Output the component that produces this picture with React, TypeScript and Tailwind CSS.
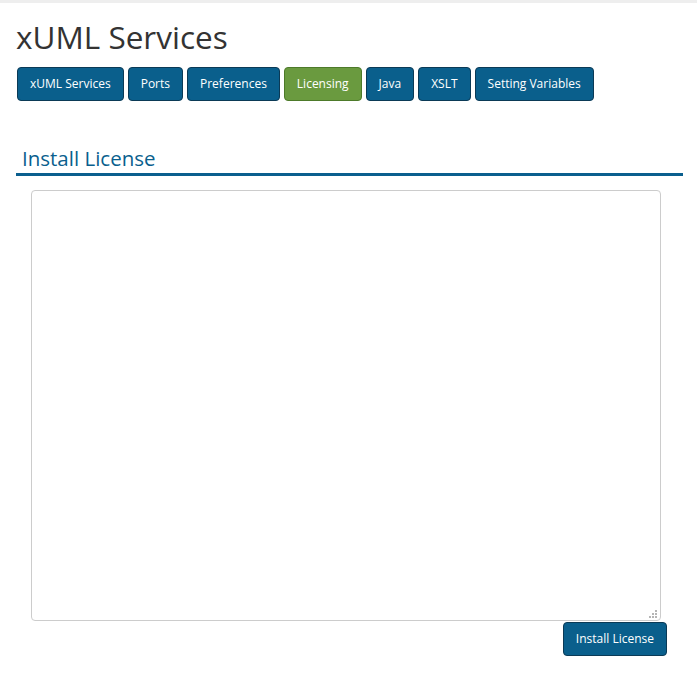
import { useState } from "react";

const tabs = [
  "xUML Services",
  "Ports",
  "Preferences",
  "Licensing",
  "Java",
  "XSLT",
  "Setting Variables",
];

// small dotted resize grip in the corner of the textarea
function Grip() {
  const dots = [
    [6, 0],
    [3, 3],
    [6, 3],
    [0, 6],
    [3, 6],
    [6, 6],
  ];
  return (
    <svg
      width="8"
      height="8"
      viewBox="0 0 8 8"
      className="pointer-events-none absolute bottom-[3px] right-[4px]"
    >
      {dots.map(([x, y]) => (
        <rect key={`${x}-${y}`} x={x} y={y} width="2" height="2" fill="#b5b5b5" />
      ))}
    </svg>
  );
}

export default function App() {
  const [active, setActive] = useState("Licensing");
  const [license, setLicense] = useState("");

  return (
    <div
      className="min-h-screen bg-white text-[#333]"
      style={{ fontFamily: '"Open Sans", "Noto Sans", sans-serif' }}
    >
      <div className="h-[3px] w-[697px] bg-[#eeeeee]" />

      <div className="px-4">
        <h1 className="mt-[14px] text-[31.5px] leading-[40px] text-[#333]">
          xUML Services
        </h1>

        {/* Tab buttons */}
        <div className="mt-[10px] flex gap-1 pl-px">
          {tabs.map((tab) => (
            <button
              key={tab}
              onClick={() => setActive(tab)}
              className={`h-[34px] rounded-[4px] border px-3 text-[12px] text-white ${
                active === tab
                  ? "border-[#4d7a2a] bg-[#6a9a3f]"
                  : "border-[#0b3a56] bg-[#0a5f8c]"
              }`}
            >
              {tab}
            </button>
          ))}
        </div>

        {/* Install License */}
        <h2 className="mt-[44px] border-b-[3px] border-[#0a5f8e] pb-[1px] pl-[6px] text-[20.5px] leading-[27px] text-[#0a5f8e]">
          Install License
        </h2>

        <div className="relative ml-[15px] mr-[22px] mt-[14px]">
          <textarea
            value={license}
            onChange={(e) => setLicense(e.target.value)}
            className="block h-[431px] w-full resize-none rounded-[4px] border border-[#cccccc] p-2 text-sm outline-none"
          />
          <Grip />
        </div>

        <div className="mr-4 mt-px flex justify-end">
          <button className="h-[34px] rounded-[4px] border border-[#0b3a56] bg-[#0a5f8c] px-3 text-[12px] text-white">
            Install License
          </button>
        </div>
      </div>
    </div>
  );
}
